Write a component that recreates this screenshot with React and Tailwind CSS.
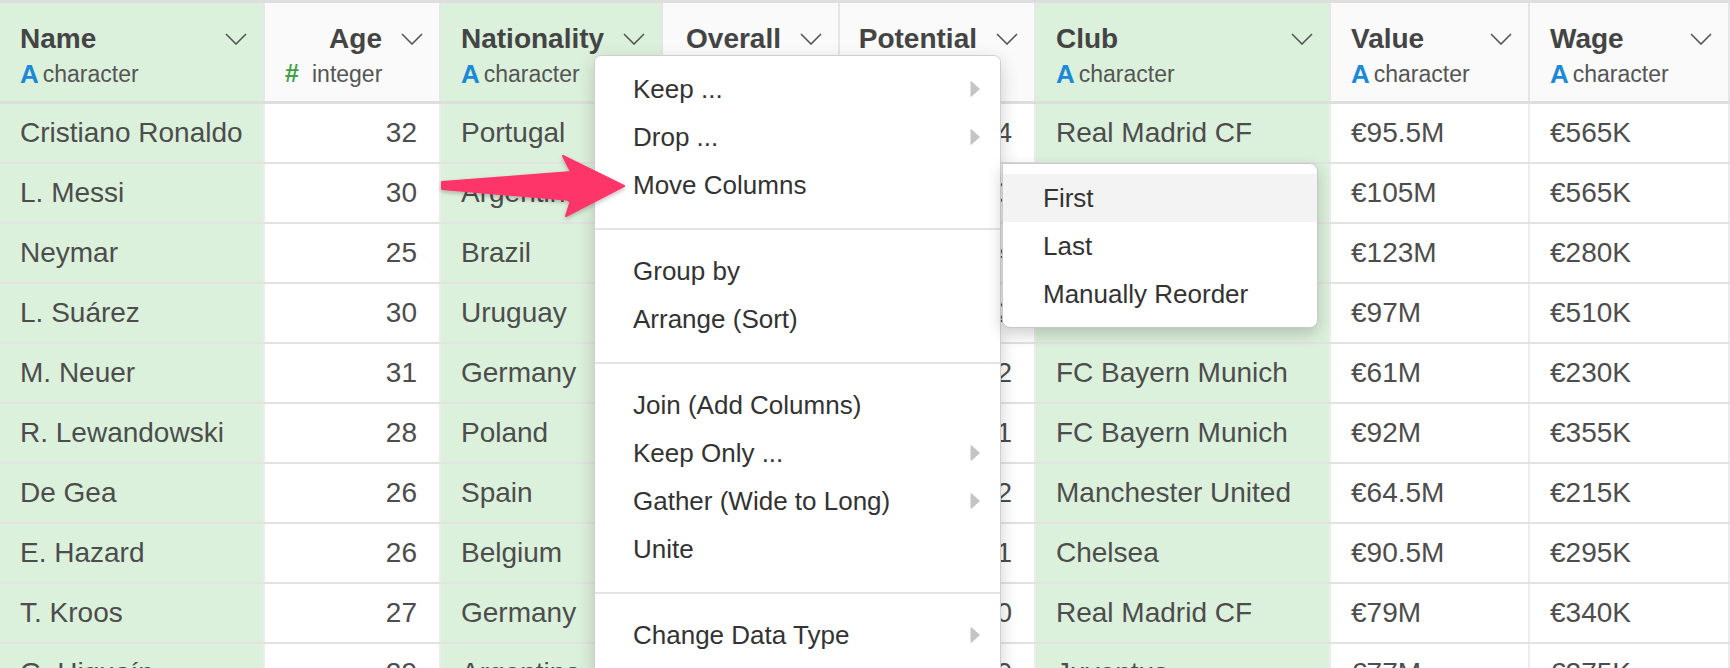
import { ChevronDown } from "lucide-react";

const cols = [
  { label: "Name", w: "w-[265px]", green: true, num: false },
  { label: "Age", w: "w-[176px]", green: false, num: true },
  { label: "Nationality", w: "w-[222px]", green: true, num: false },
  { label: "Overall", w: "w-[177px]", green: false, num: true },
  { label: "Potential", w: "w-[196px]", green: false, num: true },
  { label: "Club", w: "w-[295px]", green: true, num: false },
  { label: "Value", w: "w-[199px]", green: false, num: false },
  { label: "Wage", w: "w-[200px]", green: false, num: false },
];

const rows = [
  ["Cristiano Ronaldo", 32, "Portugal", 94, 94, "Real Madrid CF", "€95.5M", "€565K"],
  ["L. Messi", 30, "Argentina", 93, 93, "FC Barcelona", "€105M", "€565K"],
  ["Neymar", 25, "Brazil", 92, 94, "Paris Saint-Germain", "€123M", "€280K"],
  ["L. Suárez", 30, "Uruguay", 92, 92, "FC Barcelona", "€97M", "€510K"],
  ["M. Neuer", 31, "Germany", 92, 92, "FC Bayern Munich", "€61M", "€230K"],
  ["R. Lewandowski", 28, "Poland", 91, 91, "FC Bayern Munich", "€92M", "€355K"],
  ["De Gea", 26, "Spain", 90, 92, "Manchester United", "€64.5M", "€215K"],
  ["E. Hazard", 26, "Belgium", 90, 91, "Chelsea", "€90.5M", "€295K"],
  ["T. Kroos", 27, "Germany", 90, 90, "Real Madrid CF", "€79M", "€340K"],
  ["G. Higuaín", 29, "Argentina", 90, 90, "Juventus", "€77M", "€275K"],
];

function Chevron() {
  return (
    <svg width="22" height="12" viewBox="0 0 22 12" className="shrink-0">
      <polyline points="1,1 11,11 21,1" fill="none" stroke="#555" strokeWidth="1.6" />
    </svg>
  );
}

function Caret() {
  return (
    <svg width="10" height="18" viewBox="0 0 10 18">
      <path d="M1 1.5 L9.5 9 L1 16.5 Z" fill="#c4c4c4" stroke="#c4c4c4" strokeLinejoin="round" />
    </svg>
  );
}

function HeaderCell({ col }) {
  return (
    <div
      className={`${col.w} shrink-0 h-full border-r-2 border-[#e6e6e6] pl-5 pr-4 pt-[20px] ${
        col.green ? "bg-[#dcf1dc]" : "bg-[#fafafa]"
      }`}
    >
      <div className={`flex items-center h-8 ${col.num ? "justify-end gap-[19px]" : "justify-between"}`}>
        <span className="text-[28px] leading-8 font-bold text-[#444] whitespace-nowrap">{col.label}</span>
        <Chevron />
      </div>
      <div className="mt-[5px] flex items-center h-7 whitespace-nowrap">
        {col.num ? (
          <>
            <span className="text-[25px] font-bold text-[#43a047] w-[24px]">#</span>
            <span className="text-[23px] text-[#555] ml-[3px]">integer</span>
          </>
        ) : (
          <>
            <span className="text-[26px] font-bold text-[#1a8ad6]">A</span>
            <span className="text-[23px] text-[#555] ml-[4px]">character</span>
          </>
        )}
      </div>
    </div>
  );
}

function Row({ row }) {
  return (
    <div className="flex h-[60px] border-b-2 border-[#e2e2e2]">
      {cols.map((col, i) => (
        <div
          key={i}
          className={`${col.w} shrink-0 border-r-2 border-[#ececec] overflow-hidden whitespace-nowrap text-[28px] leading-[58px] text-[#4d4d4d] ${
            col.num ? "text-right pr-[22px]" : "pl-5"
          } ${col.green ? "bg-[#dcf1dc]" : "bg-white"}`}
        >
          {row[i]}
        </div>
      ))}
    </div>
  );
}

const groups = [
  [
    { t: "Keep ...", sub: true },
    { t: "Drop ...", sub: true },
    { t: "Move Columns" },
  ],
  [{ t: "Group by" }, { t: "Arrange (Sort)" }],
  [
    { t: "Join (Add Columns)" },
    { t: "Keep Only ...", sub: true },
    { t: "Gather (Wide to Long)", sub: true },
    { t: "Unite" },
  ],
  [{ t: "Change Data Type", sub: true }],
];

export default function App() {
  return (
    <div
      className="relative w-[1730px] h-[668px] overflow-hidden bg-white"
      style={{ fontFamily: '"Liberation Sans", Arial, sans-serif' }}
    >
      {/* header */}
      <div className="flex h-[104px] border-t-[3px] border-b-[3px] border-[#dedede]">
        {cols.map((c) => (
          <HeaderCell key={c.label} col={c} />
        ))}
      </div>

      {rows.map((r, i) => (
        <Row key={i} row={r} />
      ))}

      {/* column menu */}
      <div className="absolute left-[594px] top-[55px] w-[407px] h-[640px] bg-white border border-[#cfcfcf] rounded-[7px] shadow-[0_6px_18px_rgba(0,0,0,0.18)] text-[26px] text-[#333]">
        {groups.map((g, gi) => (
          <div
            key={gi}
            className={`pb-[19px] ${gi === 0 ? "pt-[9px]" : "pt-[17px] border-t-2 border-[#e4e4e4]"}`}
          >
            {g.map((it) => (
              <div key={it.t} className="flex items-center justify-between h-12 pl-[38px] pr-[20px] whitespace-nowrap">
                <span>{it.t}</span>
                {it.sub && <Caret />}
              </div>
            ))}
          </div>
        ))}
      </div>

      {/* submenu */}
      <div className="absolute left-[1002px] top-[163px] w-[316px] h-[165px] bg-white border border-[#c9c9c9] rounded-[8px] rounded-tl-none shadow-[0_6px_16px_rgba(0,0,0,0.2)] pt-[10px] text-[26px] text-[#333]">
        <div className="h-12 flex items-center pl-[40px] bg-[#f3f3f3]">First</div>
        <div className="h-12 flex items-center pl-[40px]">Last</div>
        <div className="h-12 flex items-center pl-[40px]">Manually Reorder</div>
      </div>

      {/* annotation arrow */}
      <svg className="absolute left-[430px] top-[145px] pointer-events-none" width="210" height="85" viewBox="430 145 210 85">
        <defs>
          <filter id="sh" x="-10%" y="-20%" width="130%" height="150%">
            <feDropShadow dx="0" dy="2" stdDeviation="2" floodColor="#000" floodOpacity="0.25" />
          </filter>
        </defs>
        <path
          d="M442 182 L571 172 L563 156 L624 186 L566 216 L571 200 L442 189 Z"
          fill="#fd3569"
          stroke="#fd3569"
          strokeWidth="2"
          strokeLinejoin="round"
          filter="url(#sh)"
        />
      </svg>
    </div>
  );
}
